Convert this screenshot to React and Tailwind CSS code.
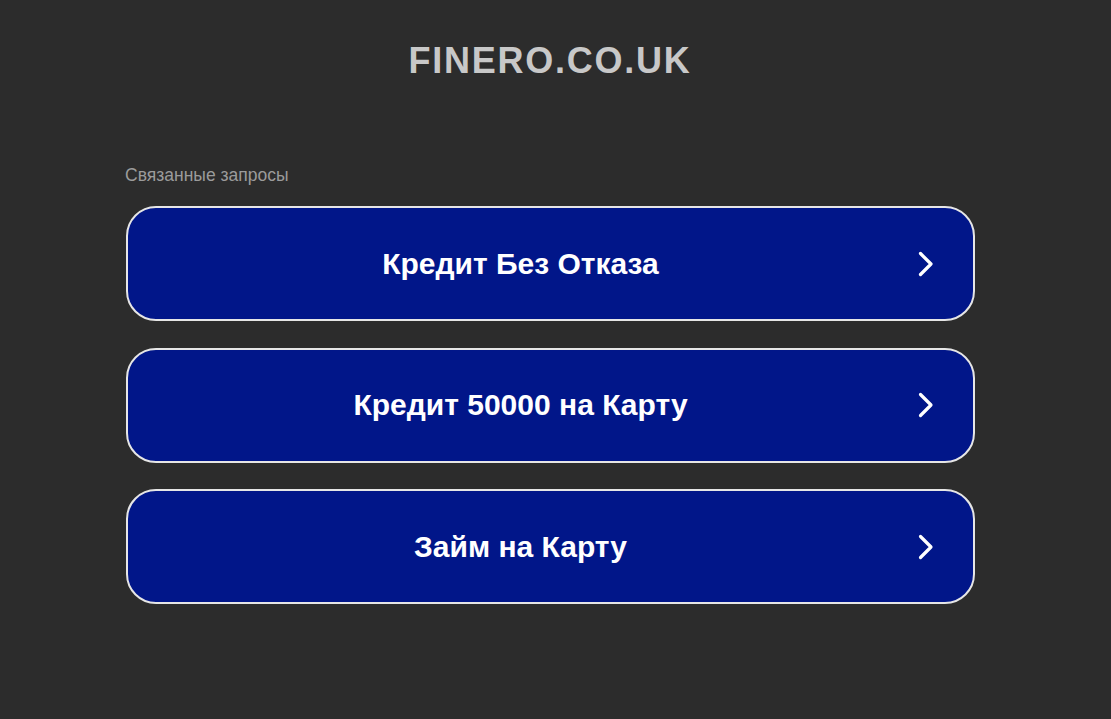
const links = ["Кредит Без Отказа", "Кредит 50000 на Карту", "Займ на Карту"];

const Chevron = () => (
  <svg width="16" height="26" viewBox="0 0 16 26" fill="none">
    <path
      d="M2.5 2.5 L13 13 L2.5 23.5"
      stroke="white"
      strokeWidth="3.2"
      strokeLinecap="round"
      strokeLinejoin="round"
    />
  </svg>
);

export default function App() {
  return (
    <div className="min-h-[719px] bg-[#2c2c2c] font-['Liberation_Sans',Arial,sans-serif]">
      <div className="pt-[38px] pr-[11px] text-center">
        <h1 className="text-[36px] leading-[46px] font-bold tracking-[1.75px] text-[#c8c8c8]">
          FINERO.CO.UK
        </h1>
      </div>

      <div className="w-[849px] ml-[126px] mt-[80px]">
        <p className="text-[17.5px] leading-[22px] text-[#9b9b9b] -ml-[1px] mt-[1px]">Связанные запросы</p>
        <div className="mt-[20px] flex flex-col gap-[26.5px]">
          {links.map((l) => (
            <a
              key={l}
              href="#"
              className="flex items-center h-[115px] rounded-[30px] border-2 border-[#e6e6e6] bg-[#011689] text-white"
            >
              <span className="flex-1 text-center text-[30px] font-bold leading-none">
                {l}
              </span>
              <span className="w-[60px] flex items-center">
                <span className="ml-[5px] flex">
                  <Chevron />
                </span>
              </span>
            </a>
          ))}
        </div>
      </div>
    </div>
  );
}
